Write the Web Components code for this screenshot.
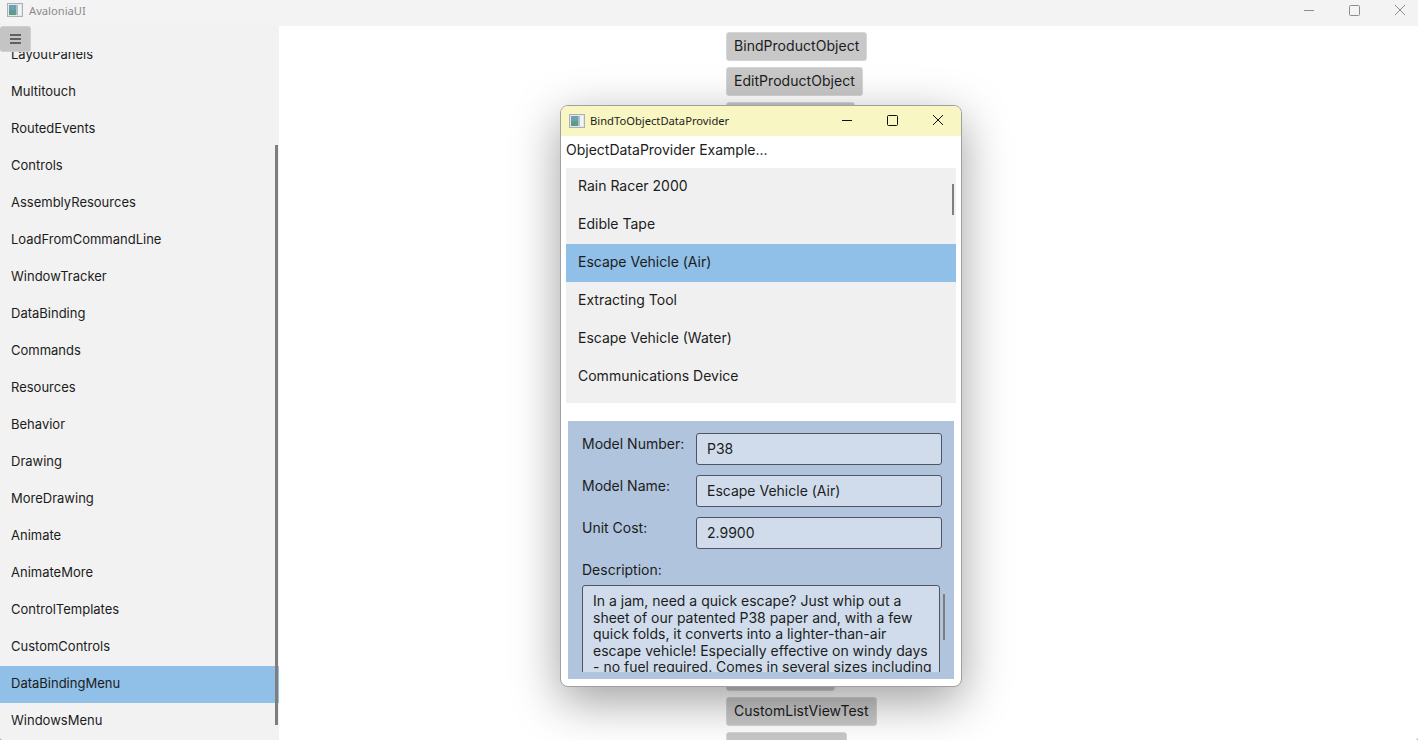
<!DOCTYPE html>
<html>
<head>
<meta charset="utf-8">
<title>AvaloniaUI</title>
<style>
  html, body { margin: 0; height: 100%; overflow: hidden; background: #b4b4b4; font-family: Inter, "Liberation Sans", sans-serif; color: #1c1c1c; }
</style>
</head>
<body>
<app-window>
  <nav-pane slot="nav">
    <nav-item>LayoutPanels</nav-item>
    <nav-item>Multitouch</nav-item>
    <nav-item>RoutedEvents</nav-item>
    <nav-item>Controls</nav-item>
    <nav-item>AssemblyResources</nav-item>
    <nav-item>LoadFromCommandLine</nav-item>
    <nav-item>WindowTracker</nav-item>
    <nav-item>DataBinding</nav-item>
    <nav-item>Commands</nav-item>
    <nav-item>Resources</nav-item>
    <nav-item>Behavior</nav-item>
    <nav-item>Drawing</nav-item>
    <nav-item>MoreDrawing</nav-item>
    <nav-item>Animate</nav-item>
    <nav-item>AnimateMore</nav-item>
    <nav-item>ControlTemplates</nav-item>
    <nav-item>CustomControls</nav-item>
    <nav-item selected>DataBindingMenu</nav-item>
    <nav-item>WindowsMenu</nav-item>
  </nav-pane>

  <demo-button>BindProductObject</demo-button>
  <demo-button>EditProductObject</demo-button>
  <demo-button style="width:129px"></demo-button>
  <demo-button style="width:109px;margin-top:525px"></demo-button>
  <demo-button>CustomListViewTest</demo-button>
  <demo-button style="width:121px"></demo-button>

  <child-window slot="float" caption="BindToObjectDataProvider">
    <div class="heading">ObjectDataProvider Example...</div>
    <product-list>
      <list-row>Rain Racer 2000</list-row>
      <list-row>Edible Tape</list-row>
      <list-row selected>Escape Vehicle (Air)</list-row>
      <list-row>Extracting Tool</list-row>
      <list-row>Escape Vehicle (Water)</list-row>
      <list-row>Communications Device</list-row>
    </product-list>
    <product-details>
      <detail-field label="Model Number:">P38</detail-field>
      <detail-field label="Model Name:">Escape Vehicle (Air)</detail-field>
      <detail-field label="Unit Cost:">2.9900</detail-field>
      <detail-text label="Description:">In a jam, need a quick escape? Just whip out a<br>sheet of our patented P38 paper and, with a few<br>quick folds, it converts into a lighter-than-air<br>escape vehicle! Especially effective on windy days<br>- no fuel required. Comes in several sizes including</detail-text>
    </product-details>
  </child-window>
</app-window>

<script>
// petite icone de fenetre, titre principal et fenetre enfant
const WIN_ICON = `<svg class="ico" width="16" height="14" viewBox="0 0 16 14">
  <rect x="0.5" y="0.5" width="15" height="13" fill="#e4e7e8" stroke="#aab2b6"/>
  <rect x="2" y="2" width="7" height="5" fill="#6f9fb4"/>
  <rect x="2" y="7" width="7" height="5" fill="#5d9c8a"/>
  <rect x="9" y="2" width="2" height="10" fill="#a9c0c6"/>
  <rect x="11" y="2" width="3" height="10" fill="#f2f4f4"/>
</svg>`;

function caps(color) {
  return `
  <svg width="46" height="26" viewBox="0 0 46 26" fill="none" stroke="${color}">
    <path d="M19 13.5H29"/></svg>
  <svg width="46" height="26" viewBox="0 0 46 26" fill="none" stroke="${color}">
    <rect x="18.5" y="8.5" width="10" height="10" rx="1"/></svg>
  <svg width="46" height="26" viewBox="0 0 46 26" fill="none" stroke="${color}">
    <path d="M18 8L28 18M28 8L18 18"/></svg>`;
}

class AppWindow extends HTMLElement {
  constructor() {
    super();
    this.attachShadow({ mode: 'open' });
    this.shadowRoot.innerHTML = `
      <style>
        :host { display: flex; flex-direction: column; width: 1418px; height: 740px; position: relative; overflow: hidden; border-radius: 0 0 4px 4px; background: #fff; }
        .bar { flex: none; height: 26px; background: #f3f3f3; display: flex; align-items: flex-start; padding-left: 7px; }
        .ico { flex: none; margin: 3px 6px 0 0; }
        .name { flex: 1; font-family: "Noto Sans", sans-serif; font-size: 11.2px; color: #8a8a8a; line-height: 21px; }
        .caps { display: flex; margin: -3px -5px 0 0; }
        .body { flex: 1; display: flex; min-height: 0; }
        .main { flex: 1; display: flex; flex-direction: column; gap: 6px; padding: 6px 0 0 447px; min-width: 0; }
        .main-wrap { flex: 1; min-width: 0; overflow: hidden; background: #fff; }
      </style>
      <div class="bar">
        ${WIN_ICON}
        <div class="name">AvaloniaUI</div>
        <div class="caps">${caps('#8c8c8c')}</div>
      </div>
      <div class="body">
        <slot name="nav"></slot>
        <div class="main-wrap"><div class="main"><slot></slot></div></div>
      </div>
      <slot name="float"></slot>`;
  }
}

class NavPane extends HTMLElement {
  constructor() {
    super();
    this.attachShadow({ mode: 'open' });
    this.shadowRoot.innerHTML = `
      <style>
        :host { display: flex; flex-direction: column; flex: none; width: 279px; height: 100%; background: #f2f2f2; position: relative; }
        .top { flex: none; height: 26px; }
        .burger { position: absolute; left: 0; top: 0; width: 31px; height: 26px; box-sizing: border-box; background: #c4c4c4; border: 1px solid #d0d0d0; border-left: 0; border-radius: 3px; display: flex; align-items: center; justify-content: center; z-index: 2; }
        .scroll { flex: 1; min-height: 0; overflow: hidden; position: relative; }
        .items { margin-top: -15px; display: flex; flex-direction: column; }
        .thumb { position: absolute; right: 1px; top: 93px; width: 3px; height: 580px; background: #7e7e7e; }
      </style>
      <div class="top"></div>
      <div class="burger">
        <svg width="11" height="10" viewBox="0 0 11 10" fill="#616161"><rect y="0" width="11" height="2"/><rect y="4" width="11" height="2"/><rect y="8" width="11" height="2"/></svg>
      </div>
      <div class="scroll">
        <div class="items"><slot></slot></div>
        <div class="thumb"></div>
      </div>`;
  }
}

class NavItem extends HTMLElement {
  constructor() {
    super();
    this.attachShadow({ mode: 'open' });
    this.shadowRoot.innerHTML = `
      <style>
        :host { display: flex; align-items: center; height: 37px; padding: 0 0 3px 11px; box-sizing: border-box; font-size: 13px; }
        :host([selected]) { background: #90bfe7; }
      </style>
      <slot></slot>`;
  }
}

class DemoButton extends HTMLElement {
  constructor() {
    super();
    this.attachShadow({ mode: 'open' });
    this.shadowRoot.innerHTML = `
      <style>
        :host { display: flex; align-items: center; align-self: flex-start; box-sizing: border-box; height: 29px; padding: 0 7px 2px; background: #c8c8c8; border: 1px solid #d6d6d6; border-radius: 3px; font-size: 14px; letter-spacing: .04px; flex: none; }
      </style>
      <slot></slot>`;
  }
}

class ChildWindow extends HTMLElement {
  constructor() {
    super();
    this.attachShadow({ mode: 'open' });
    this.shadowRoot.innerHTML = `
      <style>
        :host { position: absolute; left: 560px; top: 105px; width: 402px; height: 582px; box-sizing: border-box; display: flex; flex-direction: column; background: #fff; border: 1px solid #a0a0a0; border-radius: 8px; box-shadow: 0 14px 48px rgba(0,0,0,.38); overflow: hidden; }
        .bar { flex: none; height: 30px; background: #f8f6c2; display: flex; align-items: center; padding-left: 8px; }
        .ico { flex: none; margin-right: 5px; }
        .cap-title { flex: 1; font-family: "Noto Sans", sans-serif; font-size: 11.2px; margin-top: -1px; }
        .caps { display: flex; align-self: flex-start; margin-top: 1px; }
        .content { flex: 1; min-height: 0; padding: 0 5px; display: flex; flex-direction: column; }
        ::slotted(.heading) { font-size: 14px; height: 32px; line-height: 28px; flex: none; }
      </style>
      <div class="bar">
        ${WIN_ICON}
        <div class="cap-title">${this.getAttribute('caption')}</div>
        <div class="caps">${caps('#111')}</div>
      </div>
      <div class="content"><slot></slot></div>`;
  }
}

class ProductList extends HTMLElement {
  constructor() {
    super();
    this.attachShadow({ mode: 'open' });
    this.shadowRoot.innerHTML = `
      <style>
        :host { display: block; flex: none; height: 235px; margin-top: 0; background: #f0f0f0; position: relative; overflow: hidden; }
        .thumb { position: absolute; right: 2px; top: 16px; width: 2px; height: 31px; background: #7e7e7e; }
      </style>
      <slot></slot>
      <div class="thumb"></div>`;
  }
}

class ListRow extends HTMLElement {
  constructor() {
    super();
    this.attachShadow({ mode: 'open' });
    this.shadowRoot.innerHTML = `
      <style>
        :host { display: flex; align-items: center; box-sizing: border-box; height: 38px; padding: 0 0 4px 12px; font-size: 14px; }
        :host([selected]) { background: #90bfe7; }
      </style>
      <slot></slot>`;
  }
}

class ProductDetails extends HTMLElement {
  constructor() {
    super();
    this.attachShadow({ mode: 'open' });
    this.shadowRoot.innerHTML = `
      <style>
        :host { display: flex; flex-direction: column; gap: 10px; margin: 18px 2px 7px; padding: 12px 14px 0; flex: 1; min-height: 0; background: #b0c4de; overflow: hidden; }
      </style>
      <slot></slot>`;
  }
}

class DetailField extends HTMLElement {
  constructor() {
    super();
    this.attachShadow({ mode: 'open' });
    this.shadowRoot.innerHTML = `
      <style>
        :host { display: flex; flex: none; height: 32px; font-size: 14px; }
        .label { flex: none; width: 114px; line-height: 22px; }
        .box { flex: none; width: 246px; height: 32px; box-sizing: border-box; border: 1px solid #50555c; border-radius: 3px; background: #d0dcec; padding: 0 10px 2px; display: flex; align-items: center; }
      </style>
      <div class="label">${this.getAttribute('label')}</div>
      <div class="box"><slot></slot></div>`;
  }
}

class DetailText extends HTMLElement {
  constructor() {
    super();
    this.attachShadow({ mode: 'open' });
    this.shadowRoot.innerHTML = `
      <style>
        :host { display: block; font-size: 14px; position: relative; margin-top: 1px; flex: none; }
        .label { line-height: 20px; height: 25px; }
        .box { width: 358px; height: 110px; box-sizing: border-box; border: 1px solid #50555c; border-radius: 3px; background: #d0dcec; padding: 7px 0 7px 10px; line-height: 16.5px; white-space: nowrap; overflow: hidden; }
        .wrap { height: 87px; overflow: hidden; }
        .thumb { position: absolute; left: 361px; top: 34px; width: 2px; height: 46px; background: #7e7e7e; }
      </style>
      <div class="label">${this.getAttribute('label')}</div>
      <div class="wrap"><div class="box"><slot></slot></div></div>
      <div class="thumb"></div>`;
  }
}

customElements.define('app-window', AppWindow);
customElements.define('nav-pane', NavPane);
customElements.define('nav-item', NavItem);
customElements.define('demo-button', DemoButton);
customElements.define('child-window', ChildWindow);
customElements.define('product-list', ProductList);
customElements.define('list-row', ListRow);
customElements.define('product-details', ProductDetails);
customElements.define('detail-field', DetailField);
customElements.define('detail-text', DetailText);
</script>
</body>
</html>
